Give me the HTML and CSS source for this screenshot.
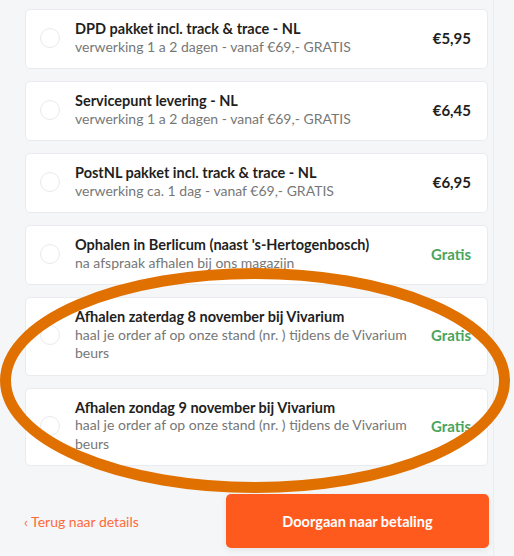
FILE: index.html
```html
<!DOCTYPE html>
<html lang="nl">
<head>
<meta charset="utf-8">
<title>Verzendmethode</title>
<link rel="stylesheet" href="styles.css">
</head>
<body>
<div class="page">
  <div class="options">
    <label class="option">
      <span class="radio"></span>
      <span class="info">
        <span class="title">DPD pakket incl. track &amp; trace - NL</span>
        <span class="desc">verwerking 1 a 2 dagen - vanaf €69,- GRATIS</span>
      </span>
      <span class="price">€5,95</span>
    </label>
    <label class="option">
      <span class="radio"></span>
      <span class="info">
        <span class="title">Servicepunt levering - NL</span>
        <span class="desc">verwerking 1 a 2 dagen - vanaf €69,- GRATIS</span>
      </span>
      <span class="price">€6,45</span>
    </label>
    <label class="option">
      <span class="radio"></span>
      <span class="info">
        <span class="title">PostNL pakket incl. track &amp; trace - NL</span>
        <span class="desc">verwerking ca. 1 dag - vanaf €69,- GRATIS</span>
      </span>
      <span class="price">€6,95</span>
    </label>
    <label class="option">
      <span class="radio"></span>
      <span class="info">
        <span class="title">Ophalen in Berlicum (naast 's-Hertogenbosch)</span>
        <span class="desc">na afspraak afhalen bij ons magazijn</span>
      </span>
      <span class="price free">Gratis</span>
    </label>
    <label class="option">
      <span class="radio"></span>
      <span class="info">
        <span class="title">Afhalen zaterdag 8 november bij Vivarium</span>
        <span class="desc">haal je order af op onze stand (nr. ) tijdens de Vivarium beurs</span>
      </span>
      <span class="price free">Gratis</span>
    </label>
    <label class="option">
      <span class="radio"></span>
      <span class="info">
        <span class="title">Afhalen zondag 9 november bij Vivarium</span>
        <span class="desc">haal je order af op onze stand (nr. ) tijdens de Vivarium beurs</span>
      </span>
      <span class="price free">Gratis</span>
    </label>
  </div>
  <div class="actions">
    <a class="back" href="#">‹ Terug naar details</a>
    <button class="next" type="button">Doorgaan naar betaling</button>
  </div>
  <svg class="annotation" width="514" height="556" viewBox="0 0 514 556" aria-hidden="true">
    <ellipse cx="255" cy="380.5" rx="249.5" ry="107" fill="none" stroke="#e07000" stroke-width="11"/>
  </svg>
</div>
</body>
</html>
```
FILE: styles.css
```css
* { box-sizing: border-box; }
html, body {
  margin: 0;
  padding: 0;
  background: #f5f6f8;
}
body {
  font-family: "Lato", "Open Sans", sans-serif;
  color: #222;
  width: 514px;
  height: 556px;
  overflow: hidden;
}
.page {
  position: relative;
  width: 494px;
  height: 556px;
  padding: 9px 5px 0 25px;
  border-right: 1px solid #eaecef;
}
.options {
  display: flex;
  flex-direction: column;
  gap: 12px;
  width: 463px;
}
.option {
  display: flex;
  align-items: center;
  background: #fff;
  border: 1px solid #e9ebee;
  border-radius: 5px;
  padding: 10px 16px 12px 14px;
  min-height: 60px;
}
.radio {
  flex: none;
  width: 20px;
  height: 20px;
  border: 1px solid #e7e9ec;
  border-radius: 50%;
  margin-right: 15px;
}
.info {
  flex: 1;
  display: flex;
  flex-direction: column;
  padding-right: 12px;
}
.title {
  font-weight: 700;
  font-size: 14.5px;
  line-height: 17.5px;
  color: #1f1f1f;
}
.desc {
  font-size: 14px;
  line-height: 18.5px;
  color: #777;
}
.price {
  flex: none;
  font-weight: 700;
  font-size: 15px;
  color: #1f1f1f;
}
.price.free {
  color: #4aa45c;
}
.actions {
  display: flex;
  align-items: center;
  justify-content: space-between;
  width: 465px;
  margin-left: -1px;
  margin-top: 28px;
}
.back {
  font-size: 14px;
  color: #ff6a3a;
  text-decoration: none;
}
.next {
  width: 263px;
  height: 54px;
  border: none;
  border-radius: 5px;
  background: #ff5a1e;
  color: #fff;
  font-family: inherit;
  font-weight: 700;
  font-size: 14.5px;
  box-shadow: 0 2px 6px rgba(0,0,0,0.08);
}
.annotation {
  position: absolute;
  left: 0;
  top: 0;
  pointer-events: none;
}
```
